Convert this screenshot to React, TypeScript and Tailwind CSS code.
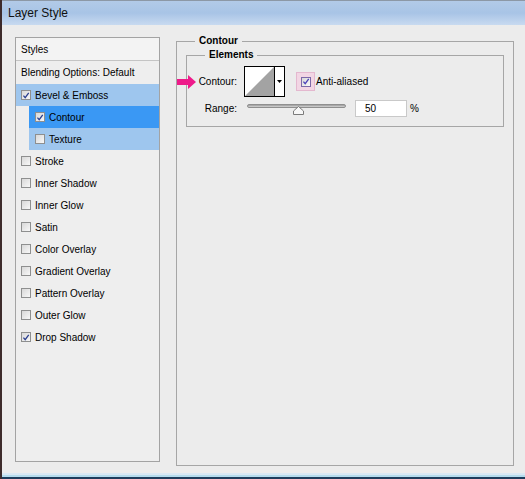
import React from 'react';

// One row in the styles list on the left
type StyleItem = { label: string; checked?: boolean; kind?: 'plain' | 'group' | 'sub' | 'active' };

const items: StyleItem[] = [
  { label: 'Bevel & Emboss', checked: true, kind: 'group' },
  { label: 'Contour', checked: true, kind: 'active' },
  { label: 'Texture', checked: false, kind: 'sub' },
  { label: 'Stroke' },
  { label: 'Inner Shadow' },
  { label: 'Inner Glow' },
  { label: 'Satin' },
  { label: 'Color Overlay' },
  { label: 'Gradient Overlay' },
  { label: 'Pattern Overlay' },
  { label: 'Outer Glow' },
  { label: 'Drop Shadow', checked: true },
];

const CheckBox: React.FC<{ checked?: boolean; purple?: boolean }> = ({ checked, purple }) => (
  <span
    className={
      'relative flex h-[10px] w-[10px] shrink-0 items-center justify-center border bg-gradient-to-br from-[#d8d8d8] to-[#f8f8f8] ' +
      (purple ? 'border-[#7d6aa8]' : 'border-[#8e8f8f]')
    }
  >
    {checked && (
      <svg viewBox="0 0 10 10" className="h-[9px] w-[9px]">
        <path d="M1.8 5.2 L4 7.8 L8.4 1.6" fill="none" stroke={purple ? '#4a3fb8' : '#2b3f8f'} strokeWidth="1.6" />
      </svg>
    )}
  </span>
);

const StyleRow: React.FC<{ item: StyleItem }> = ({ item }) => {
  const kind = item.kind ?? 'plain';
  const indent = kind === 'active' || kind === 'sub';
  const bg =
    kind === 'active' ? 'bg-[#3a98f4]' : kind === 'group' || kind === 'sub' ? 'bg-[#9ec6ee]' : '';
  return (
    <div className={'flex h-[22px] items-center ' + (indent ? 'ml-[13px] pl-[6px] ' : 'pl-[5px] ') + bg}>
      <CheckBox checked={item.checked} />
      <span className="ml-[4px] whitespace-nowrap">{item.label}</span>
    </div>
  );
};

const ContourSwatch: React.FC = () => (
  <div className="flex h-[31px] w-[41px] border border-black bg-white">
    <svg viewBox="0 0 29 29" preserveAspectRatio="none" className="h-full w-[29px]">
      <polygon points="0,29 29,0 29,29" fill="#a3a3a3" />
    </svg>
    <div className="flex flex-1 items-center justify-center border-l border-black">
      <svg viewBox="0 0 5 3" className="h-[3px] w-[5px]">
        <polygon points="0,0 5,0 2.5,3" fill="#000" />
      </svg>
    </div>
  </div>
);

const Slider: React.FC = () => (
  <div className="relative h-[12px] w-[99px]">
    <div className="absolute left-0 right-0 top-0 h-[4px] rounded-full border border-[#8f8f8f] bg-gradient-to-b from-[#9a9a9a] to-[#d6d6d6]" />
    <svg viewBox="0 0 11 9" className="absolute left-[46px] top-[2px] h-[9px] w-[11px]">
      <polygon points="5.5,0.5 10.5,5 10.5,8.5 0.5,8.5 0.5,5" fill="#f7f7f7" stroke="#7b7b7b" strokeWidth="1" />
    </svg>
  </div>
);

export default function App() {
  return (
    <div
      className="flex h-[479px] w-[525px] flex-col overflow-hidden border-l-2 border-[#3d2b2b] bg-[#ececec] text-[10px] text-black"
      style={{ fontFamily: '"Liberation Sans", Arial, sans-serif' }}
    >
      {/* title bar */}
      <div className="flex h-[25px] shrink-0 items-center border-t border-[#8c98a6] bg-gradient-to-b from-[#b2cae8] via-[#a8c4e6] to-[#c8daf0] pl-[6px] text-[12px] text-[#111]">
        Layer Style
      </div>

      <div className="flex flex-1 pl-[13px] pt-[12px]">
        {/* styles list */}
        <div className="flex h-[425px] w-[145px] flex-col border border-[#a3a3a3] bg-[#eeeeee]">
          <div className="flex h-[23px] items-center border-b border-[#c4c4c4] bg-[#f3f3f3] pl-[5px]">Styles</div>
          <div className="flex h-[23px] items-center pl-[5px]">Blending Options: Default</div>
          {items.map((it) => (
            <StyleRow key={it.label} item={it} />
          ))}
        </div>

        {/* contour panel */}
        <fieldset className="ml-[16px] mt-[-2px] h-[431px] w-[338px] border border-[#a6a6a6] px-[9px]">
          <legend className="ml-[9px] px-[4px] font-bold leading-[12px]">Contour</legend>
          <fieldset className="mt-[2px] h-[78px] border border-[#a6a6a6] pt-[5px]">
            <legend className="ml-[18px] px-[4px] font-bold leading-[12px]">Elements</legend>
            <div className="relative flex h-[31px] items-center">
              <svg viewBox="0 0 19 14" className="absolute left-[-10px] top-[9px] h-[14px] w-[19px]">
                <polygon points="0,4 11,4 11,0 19,7 11,14 11,10 0,10" fill="#ee1a8a" />
              </svg>
              <span className="w-[51px] pr-[1px] text-right">Contour:</span>
              <div className="ml-[6px]">
                <ContourSwatch />
              </div>
              <div className="ml-[11px] flex h-[19px] w-[19px] items-center justify-center border border-[#e4b8cf] bg-[#f2d6e4]">
                <CheckBox checked purple />
              </div>
              <span className="ml-[1px]">Anti-aliased</span>
            </div>
            <div className="mt-[2px] flex h-[18px] items-center">
              <span className="w-[51px] pr-[1px] text-right">Range:</span>
              <div className="ml-[9px] pt-[3px]">
                <Slider />
              </div>
              <div className="ml-[9px] flex h-[17px] w-[52px] items-center border border-[#c9c9c9] bg-white pl-[9px]">50</div>
              <span className="ml-[3px]">%</span>
            </div>
          </fieldset>
        </fieldset>
      </div>

      {/* bottom frame */}
      <div className="h-[2px] shrink-0 bg-[#d9e8f4]" />
      <div className="h-[2px] shrink-0 bg-[#b5dced]" />
      <div className="h-[2px] shrink-0 bg-[#1d3c5c]" />
    </div>
  );
}
